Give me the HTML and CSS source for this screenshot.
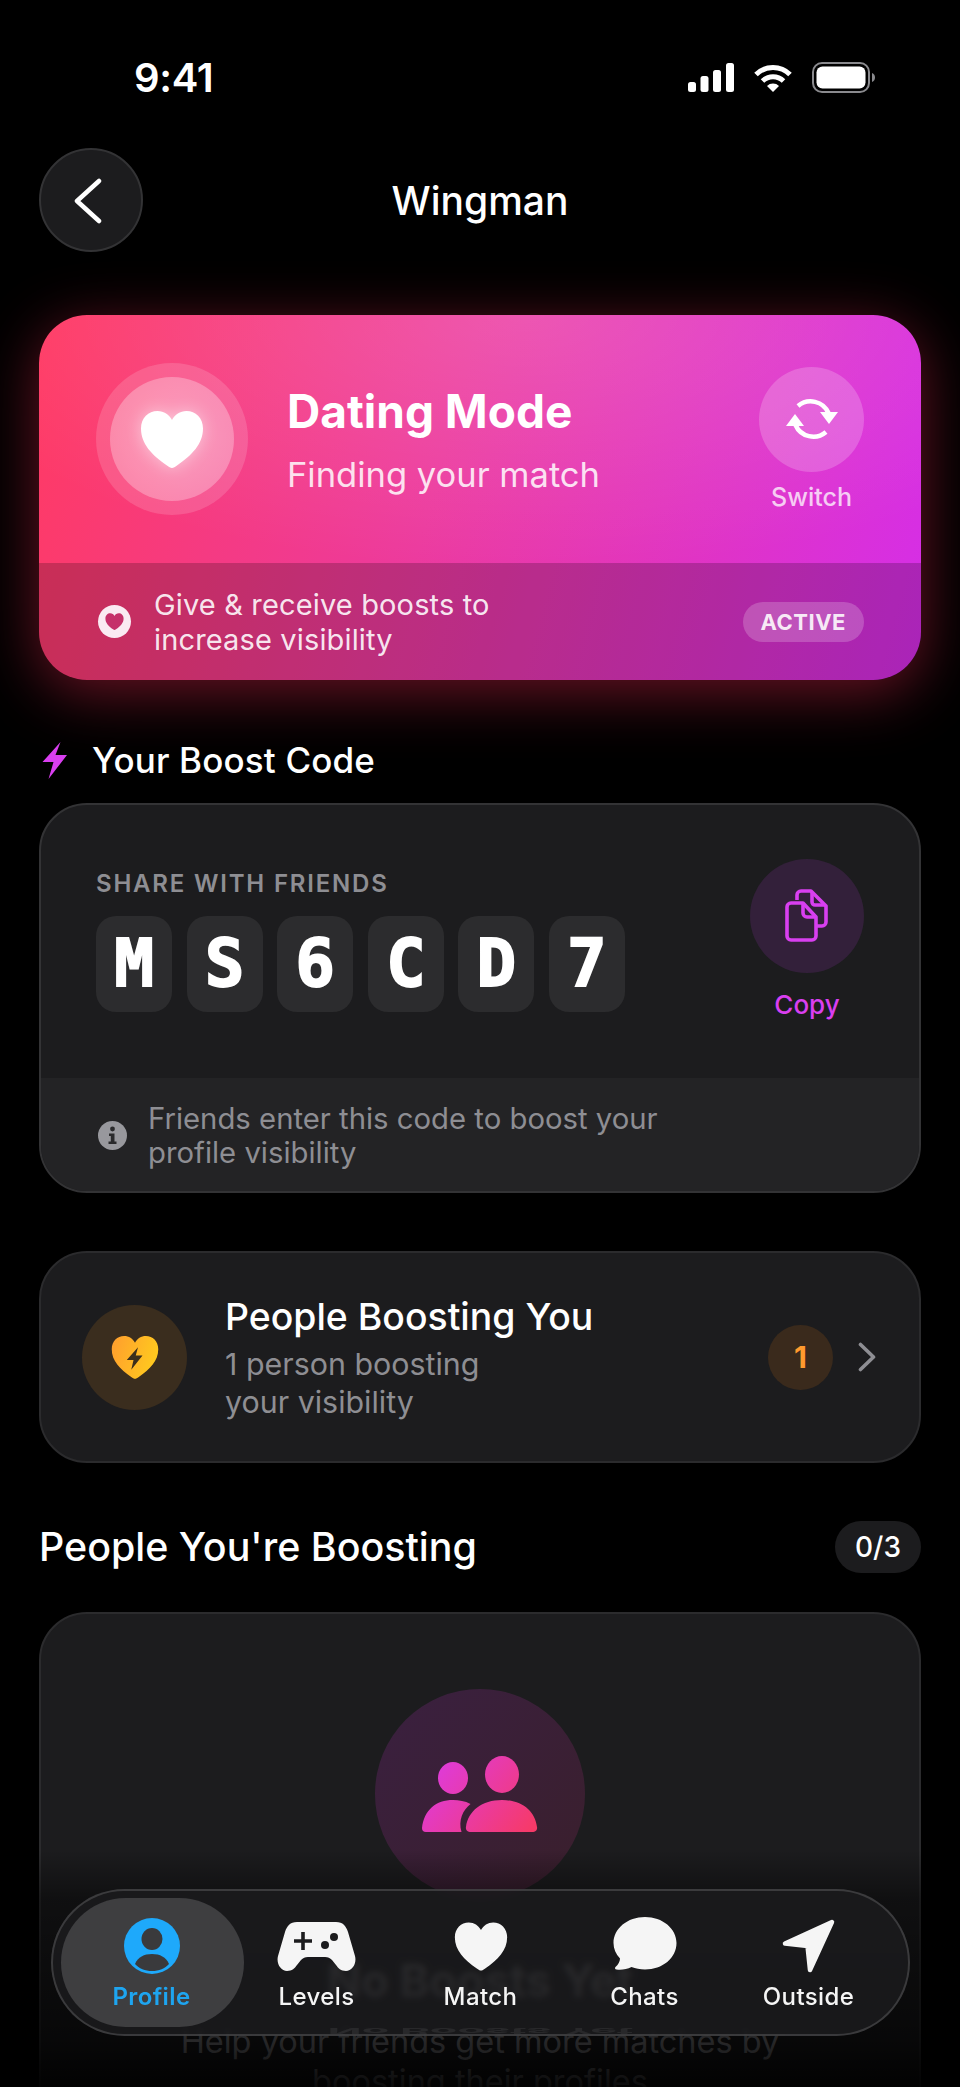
FILE: index.html
```html
<!DOCTYPE html>
<html lang="en">
  <head>
    <meta charset="UTF-8" />
    <meta name="viewport" content="width=device-width, initial-scale=1.0" />
    <title>Wingman</title>
    <link rel="stylesheet" href="styles.css">
  </head>
  <body>
    <svg class="defs" width="0" height="0">
      <defs>
        <symbol id="heart" viewBox="0 0 64 58">
          <path d="M32 58C30.5 58 29 57 27 55.6C12 45 1 34 1 18.5C1 8 8.5 1 17.5 1C24 1 29 4.5 32 10C35 4.5 40 1 46.5 1C55.5 1 63 8 63 18.5C63 34 52 45 37 55.6C35 57 33.5 58 32 58Z" />
        </symbol>
        <linearGradient id="amber" x1="0" y1="0" x2="1" y2="0.3">
          <stop offset="0" stop-color="#ff9d2e" />
          <stop offset="1" stop-color="#ffc81f" />
        </linearGradient>
        <linearGradient id="pinks" gradientUnits="userSpaceOnUse" x1="10" y1="5" x2="105" y2="80">
          <stop offset="0" stop-color="#dd3be0" />
          <stop offset="1" stop-color="#f63a68" />
        </linearGradient>
      </defs>
    </svg>

    <div class="screen">
      <!-- status bar -->
      <div class="status">
        <span class="time">9:41</span>
        <div class="status-icons">
          <svg width="46" height="29" viewBox="0 0 46 29" fill="#fff">
            <rect x="0" y="19" width="8" height="10" rx="2.5" />
            <rect x="12.5" y="13" width="8" height="16" rx="2.5" />
            <rect x="25" y="7" width="8" height="22" rx="2.5" />
            <rect x="38" y="0" width="8" height="29" rx="2.5" />
          </svg>
          <svg width="40" height="29" viewBox="0 0 40 29" fill="none" stroke="#fff" stroke-width="5">
            <path d="M3 11.5A24 24 0 0 1 37 11.5" />
            <path d="M9.5 18A15 15 0 0 1 30.5 18" />
            <path d="M14 23A8.5 8.5 0 0 1 26 23L20 29Z" fill="#fff" stroke="none" />
          </svg>
          <svg width="63" height="31" viewBox="0 0 63 31">
            <rect x="1" y="1" width="56" height="29" rx="9" fill="none" stroke="#8a8a8e" stroke-width="2" />
            <rect x="4.5" y="4.5" width="49" height="22" rx="6" fill="#fff" />
            <path d="M60 11C62 11.5 63 13.5 63 15.5C63 17.5 62 19.5 60 20Z" fill="#8a8a8e" />
          </svg>
        </div>
      </div>

      <!-- header -->
      <div class="header">
        <button class="back">
          <svg width="30" height="46" viewBox="0 0 30 46" fill="none" stroke="#fff" stroke-width="4.5" stroke-linecap="round" stroke-linejoin="round">
            <path d="M26 3L4 23L26 43" />
          </svg>
        </button>
        <h1>Wingman</h1>
      </div>

      <!-- mode card -->
      <div class="hero">
        <div class="hero-main">
          <div class="ring">
            <div class="ring-inner">
              <svg class="ring-heart" width="64" height="58" fill="#fff"><use href="#heart" /></svg>
            </div>
          </div>
          <div class="hero-text">
            <div class="hero-title">Dating Mode</div>
            <div class="hero-sub">Finding your match</div>
          </div>
          <div class="switch">
            <div class="switch-btn">
              <svg width="54" height="46" viewBox="0 0 54 46" fill="none" stroke="#fff" stroke-width="4.5">
                <path d="M13 10A19.5 19.5 0 0 1 43.5 17" />
                <path d="M41 36A19.5 19.5 0 0 1 10.5 29" />
                <path d="M35 16H53L44 28Z" fill="#fff" stroke="none" />
                <path d="M1 30H19L10 18Z" fill="#fff" stroke="none" />
              </svg>
            </div>
            <span>Switch</span>
          </div>
        </div>
        <div class="hero-foot">
          <div class="mini-heart">
            <svg width="19" height="17" fill="#c5306a"><use href="#heart" /></svg>
          </div>
          <p>Give &amp; receive boosts to<br />increase visibility</p>
          <span class="active-pill">ACTIVE</span>
        </div>
      </div>

      <!-- boost code -->
      <div class="section-head">
        <svg width="26" height="37" viewBox="0 0 25 37" fill="#d93ff0">
          <path d="M18 0L0 20H11L6 37L24.5 13H13Z" />
        </svg>
        <h2>Your Boost Code</h2>
      </div>
      <div class="card code-card">
        <div class="code-main">
          <div>
            <div class="code-label">SHARE WITH FRIENDS</div>
            <div class="tiles">
              <span class="tile">M</span>
              <span class="tile">S</span>
              <span class="tile">6</span>
              <span class="tile">C</span>
              <span class="tile">D</span>
              <span class="tile">7</span>
            </div>
          </div>
          <div class="copy">
            <div class="copy-btn">
              <svg width="44" height="54" viewBox="0 0 44 54" fill="none" stroke="#d93ff0" stroke-width="3.6" stroke-linejoin="round">
                <path d="M6 14H18L31 28V47A4 4 0 0 1 27 51H6A4 4 0 0 1 2 47V18A4 4 0 0 1 6 14Z" />
                <path d="M18 14V24A4 4 0 0 0 22 28H31" />
                <path d="M12 11V6A4 4 0 0 1 16 2H26L41 17V33A4 4 0 0 1 37 37H32" />
                <path d="M27 3V13A3 3 0 0 0 30 16H40" />
              </svg>
            </div>
            <span>Copy</span>
          </div>
        </div>
        <div class="code-foot">
          <svg width="29" height="29" viewBox="0 0 29 29">
            <circle cx="14.5" cy="14.5" r="14.5" fill="#98989d" />
            <circle cx="14.5" cy="8" r="2.4" fill="#2a2a2c" />
            <path d="M11 12.5H16.5V20.5H18.5V23H10.5V20.5H12.8V15H11Z" fill="#2a2a2c" />
          </svg>
          <p>Friends enter this code to boost your<br />profile visibility</p>
        </div>
      </div>

      <!-- incoming boosts -->
      <div class="card people-card">
        <div class="people-icon">
          <svg width="48" height="44" viewBox="0 0 64 58">
            <path fill="url(#amber)" d="M32 58C30.5 58 29 57 27 55.6C12 45 1 34 1 18.5C1 8 8.5 1 17.5 1C24 1 29 4.5 32 10C35 4.5 40 1 46.5 1C55.5 1 63 8 63 18.5C63 34 52 45 37 55.6C35 57 33.5 58 32 58Z" />
            <path fill="#3b2f1c" d="M36 16L21 33H30L27 46L42 27H33Z" />
          </svg>
        </div>
        <div class="people-text">
          <div class="people-title">People Boosting You</div>
          <div class="people-sub">1 person boosting<br />your visibility</div>
        </div>
        <span class="count">1</span>
        <svg width="18" height="30" viewBox="0 0 18 30" fill="none" stroke="#8e8e93" stroke-width="3.6" stroke-linecap="round" stroke-linejoin="round">
          <path d="M2.5 2.5L15.5 15L2.5 27.5" />
        </svg>
      </div>

      <!-- outgoing boosts -->
      <div class="boosting-head">
        <h2>People You're Boosting</h2>
        <span class="quota">0/3</span>
      </div>
      <div class="card empty-card">
        <div class="empty-circle">
          <svg width="116" height="76" viewBox="0 0 116 76" fill="url(#pinks)">
            <ellipse cx="31" cy="22" rx="15" ry="16" />
            <ellipse cx="80" cy="18.5" rx="17" ry="18.5" />
            <path d="M0 72C2 54 14 44 31 44C37 44 43 45 48.5 48C41 54 36 64 39.5 76H4A4 4 0 0 1 0 72Z" />
            <path d="M48 76A4 4 0 0 1 44 71C46 55 60 44 80 44C100 44 113 55 115 71A4 4 0 0 1 111 76Z" />
          </svg>
        </div>
        <h3>No Boosts Yet</h3>
        <p>Help your friends get more matches by<br />boosting their profiles</p>
      </div>

      <div class="fade"></div>

      <!-- tab bar -->
      <nav class="tabbar">
        <a class="tab active">
          <span class="tab-icon">
            <svg width="56" height="56" viewBox="0 0 56 56">
              <circle cx="28" cy="28" r="28" fill="#1ea9fb" />
              <ellipse cx="28" cy="21" rx="10.5" ry="11" fill="#3a3a3c" />
              <path d="M11 46C14 39 20 36 28 36C36 36 42 39 45 46C41 50.5 35 53 28 53C21 53 15 50.5 11 46Z" fill="#3a3a3c" />
            </svg>
          </span>
          <span>Profile</span>
        </a>
        <a class="tab">
          <span class="tab-icon">
            <svg width="79" height="49" viewBox="0 0 79 49">
              <path fill="#f5f5f5" d="M20 0H59C66 0 69 4 71 10L78 34C80 42 75 49 69 49C64 49 61 46 59 43L55 38C53 36 51 35 48 35H31C28 35 26 36 24 38L20 43C18 46 15 49 10 49C4 49 -1 42 1 34L8 10C10 4 13 0 20 0Z" />
              <path fill="none" stroke="#1c1c1e" stroke-width="3.6" d="M17 19H35M26 10V28" />
              <circle cx="57" cy="15" r="4" fill="#1c1c1e" />
              <circle cx="48" cy="23" r="4" fill="#1c1c1e" />
            </svg>
          </span>
          <span>Levels</span>
        </a>
        <a class="tab">
          <span class="tab-icon">
            <svg width="54" height="50" fill="#f5f5f5"><use href="#heart" /></svg>
          </span>
          <span>Match</span>
        </a>
        <a class="tab">
          <span class="tab-icon">
            <svg width="64" height="59" viewBox="0 0 64 59" fill="#f5f5f5">
              <path d="M32 0C49.5 0 63.5 11.5 63.5 26C63.5 41 49.5 52.5 32 52.5C27 52.5 22.5 51.5 18.5 50C14 52.5 8 53 3.5 52.5C2 52.3 1.5 51 2.5 50C5.5 47.5 7 44 7 41.5C2.8 37 0.5 32 0.5 26C0.5 11.5 14.5 0 32 0Z" />
            </svg>
          </span>
          <span>Chats</span>
        </a>
        <a class="tab">
          <span class="tab-icon">
            <svg width="54" height="54" viewBox="0 0 54 54" fill="#f5f5f5" stroke="#f5f5f5" stroke-width="4.5" stroke-linejoin="round">
              <path d="M50 3L3 24.5L25.5 27L28 51Z" />
            </svg>
          </span>
          <span>Outside</span>
        </a>
        <span class="mirror" aria-hidden="true">No Boosts Yet</span>
      </nav>
    </div>
  </body>
</html>
```

FILE: styles.css
```css
* {
  box-sizing: border-box;
}
html,
body {
  margin: 0;
  background: #000;
}
body {
  font-family: Inter, "Noto Sans", sans-serif;
  color: #fff;
}
h1,
h2,
h3,
p {
  margin: 0;
}
.defs {
  position: absolute;
}
.screen {
  position: relative;
  width: 960px;
  height: 2087px;
  padding: 62px 39px 0;
  overflow: hidden;
  background: #000;
}

/* status bar */
.status {
  display: flex;
  align-items: center;
  justify-content: space-between;
  height: 31px;
  padding: 0 46px 0 95px;
}
.time {
  font-size: 40px;
  font-weight: 600;
  letter-spacing: -0.3px;
}
.status-icons {
  display: flex;
  align-items: center;
  gap: 19px;
}

/* header */
.header {
  position: relative;
  display: flex;
  align-items: center;
  justify-content: center;
  height: 104px;
  margin-top: 55px;
}
.back {
  position: absolute;
  left: 0;
  top: 0;
  display: flex;
  align-items: center;
  justify-content: center;
  width: 104px;
  height: 104px;
  padding: 2px 7px 0 0;
  border-radius: 50%;
  border: 2px solid #333335;
  background: #1c1c1e;
}
.header h1 {
  font-size: 39px;
  font-weight: 500;
}

/* mode card */
.hero {
  height: 365px;
  margin-top: 63px;
  border-radius: 48px;
  overflow: hidden;
  background:
    radial-gradient(ellipse 70% 70% at 55% 0, rgba(255, 255, 255, 0.15), rgba(255, 255, 255, 0) 100%),
    linear-gradient(105deg, #ff3a63 0%, #ec3a9e 45%, #d52ee8 100%);
  box-shadow: 0 12px 60px rgba(255, 45, 85, 0.42);
}
.hero-main {
  display: flex;
  align-items: center;
  height: 248px;
  padding: 0 57px;
}
.ring {
  display: flex;
  align-items: center;
  justify-content: center;
  flex: none;
  width: 152px;
  height: 152px;
  border-radius: 50%;
  background: rgba(255, 255, 255, 0.15);
}
.ring-inner {
  display: flex;
  align-items: center;
  justify-content: center;
  width: 124px;
  height: 124px;
  border-radius: 50%;
  background: radial-gradient(circle, rgba(255, 255, 255, 0.36) 20%, rgba(255, 255, 255, 0.24) 100%);
}
.ring-heart {
  filter: drop-shadow(0 0 8px rgba(255, 255, 255, 0.45));
}
.hero-text {
  flex: 1;
  margin-left: 39px;
  padding-top: 2px;
}
.hero-title {
  font-size: 46px;
  font-weight: 700;
  line-height: 56px;
}
.hero-sub {
  margin-top: 14px;
  font-size: 34.5px;
  line-height: 44px;
  color: rgba(255, 255, 255, 0.85);
}
.switch {
  display: flex;
  flex-direction: column;
  align-items: center;
  gap: 10px;
  width: 105px;
  font-size: 25px;
  font-weight: 500;
  color: rgba(255, 255, 255, 0.75);
}
.switch-btn {
  display: flex;
  align-items: center;
  justify-content: center;
  width: 105px;
  height: 105px;
  border-radius: 50%;
  background: rgba(255, 255, 255, 0.2);
}
.hero-foot {
  display: flex;
  align-items: center;
  height: 117px;
  padding: 0 57px 0 59px;
  background: rgba(0, 0, 0, 0.2);
}
.mini-heart {
  display: flex;
  align-items: center;
  justify-content: center;
  flex: none;
  width: 33px;
  height: 33px;
  border-radius: 50%;
  background: #faeaf2;
}
.hero-foot p {
  flex: 1;
  margin-left: 23px;
  font-size: 29px;
  line-height: 35px;
  letter-spacing: 0.15px;
  color: rgba(255, 255, 255, 0.9);
}
.active-pill {
  padding: 0 18px;
  font-size: 22px;
  font-weight: 700;
  line-height: 40px;
  letter-spacing: 0.5px;
  border-radius: 20px;
  color: rgba(255, 255, 255, 0.9);
  background: rgba(255, 255, 255, 0.2);
}

/* cards */
.card {
  border: 2px solid #2b2b2d;
  border-radius: 48px;
  background: #1c1c1e;
  overflow: hidden;
}

/* boost code */
.section-head {
  display: flex;
  align-items: center;
  gap: 24px;
  height: 38px;
  margin: 61px 0 0 3px;
}
.section-head h2 {
  font-size: 35px;
  font-weight: 500;
  letter-spacing: 0.15px;
}
.code-card {
  height: 390px;
  margin-top: 24px;
  border-color: #333335;
}
.code-main {
  display: flex;
  align-items: center;
  justify-content: space-between;
  height: 273px;
  padding: 0 55px 4px;
}
.code-label {
  font-size: 24px;
  font-weight: 600;
  line-height: 32px;
  letter-spacing: 1.8px;
  color: #8e8e93;
}
.tiles {
  display: flex;
  gap: 14.6px;
  margin-top: 16px;
}
.tile {
  display: flex;
  align-items: center;
  justify-content: center;
  width: 76px;
  height: 96px;
  border-radius: 20px;
  background: #2c2c2e;
  font-family: "DejaVu Sans Mono", monospace;
  font-size: 66px;
  font-weight: 700;
  -webkit-text-stroke: 1.8px #fff;
}
.copy {
  display: flex;
  flex-direction: column;
  align-items: center;
  gap: 16px;
  font-size: 26px;
  font-weight: 500;
  color: #d93ff0;
}
.copy-btn {
  display: flex;
  align-items: center;
  justify-content: center;
  width: 114px;
  height: 114px;
  border-radius: 50%;
  background: #33203a;
}
.code-foot {
  display: flex;
  align-items: center;
  gap: 21px;
  height: 115px;
  padding: 0 57px;
  background: #232325;
}
.code-foot p {
  font-size: 29.3px;
  line-height: 34px;
  color: #8e8e93;
}

/* incoming boosts */
.people-card {
  display: flex;
  align-items: center;
  height: 212px;
  margin-top: 58px;
  padding: 0 43px 0 41px;
}
.people-icon {
  display: flex;
  align-items: center;
  justify-content: center;
  flex: none;
  width: 105px;
  height: 105px;
  border-radius: 50%;
  background: #3a2d1e;
}
.people-text {
  flex: 1;
  margin-left: 38px;
}
.people-title {
  font-size: 37.4px;
  font-weight: 500;
  line-height: 46px;
}
.people-sub {
  margin-top: 5px;
  font-size: 30.4px;
  line-height: 38px;
  color: #8e8e93;
}
.count {
  width: 65px;
  height: 65px;
  margin-right: 25px;
  border-radius: 50%;
  background: #3a2a1c;
  text-align: center;
  font-size: 30px;
  font-weight: 700;
  line-height: 65px;
  color: #ff9a2e;
}

/* outgoing boosts */
.boosting-head {
  display: flex;
  align-items: center;
  justify-content: space-between;
  height: 52px;
  margin-top: 58px;
}
.boosting-head h2 {
  font-size: 39.4px;
  font-weight: 500;
}
.quota {
  padding: 0 20px;
  font-size: 28px;
  font-weight: 500;
  line-height: 52px;
  border-radius: 26px;
  background: #1c1c1e;
}
.empty-card {
  height: 600px;
  margin-top: 39px;
  padding-top: 75px;
  text-align: center;
}
.empty-circle {
  display: flex;
  align-items: center;
  justify-content: center;
  width: 210px;
  height: 210px;
  margin: 0 auto;
  border-radius: 50%;
  background: linear-gradient(135deg, #3a2040, #3a1f2c);
}
.empty-card h3 {
  margin-top: 54px;
  font-size: 45px;
  font-weight: 700;
  line-height: 56px;
}
.empty-card p {
  margin-top: 13px;
  font-size: 32.5px;
  line-height: 40px;
  color: #8e8e93;
}

/* fade under the tab bar */
.fade {
  position: absolute;
  left: 0;
  right: 0;
  top: 1850px;
  bottom: 0;
  background: linear-gradient(180deg, rgba(0, 0, 0, 0) 0, rgba(0, 0, 0, 0.45) 50px, rgba(0, 0, 0, 0.72) 190px, rgba(0, 0, 0, 0.92) 237px);
}

/* tab bar */
.tabbar {
  position: absolute;
  left: 51px;
  top: 1889px;
  display: grid;
  grid-template-columns: repeat(5, 164px);
  justify-content: center;
  width: 859px;
  height: 147px;
  padding: 7px 0;
  border: 2px solid rgba(255, 255, 255, 0.15);
  border-radius: 74px;
  background: rgba(28, 28, 30, 0.84);
  backdrop-filter: blur(3px);
  overflow: hidden;
}
.tab {
  display: flex;
  flex-direction: column;
  align-items: center;
  gap: 8px;
  padding-top: 20px;
  font-size: 24px;
  font-weight: 500;
  letter-spacing: 0.4px;
  color: #f5f5f5;
}
.tab-icon {
  display: flex;
  align-items: center;
  height: 56px;
}
.tab.active {
  margin: 0 -9.5px;
  padding-right: 2px;
  border-radius: 65px;
  background: #3e3e40;
  color: #1ea5f0;
  font-weight: 600;
}
.mirror {
  position: absolute;
  left: 0;
  right: 0;
  bottom: -19px;
  text-align: center;
  font-size: 45px;
  font-weight: 700;
  line-height: 44px;
  color: rgba(255, 255, 255, 0.07);
  transform: scaleY(-0.2);
}
```
